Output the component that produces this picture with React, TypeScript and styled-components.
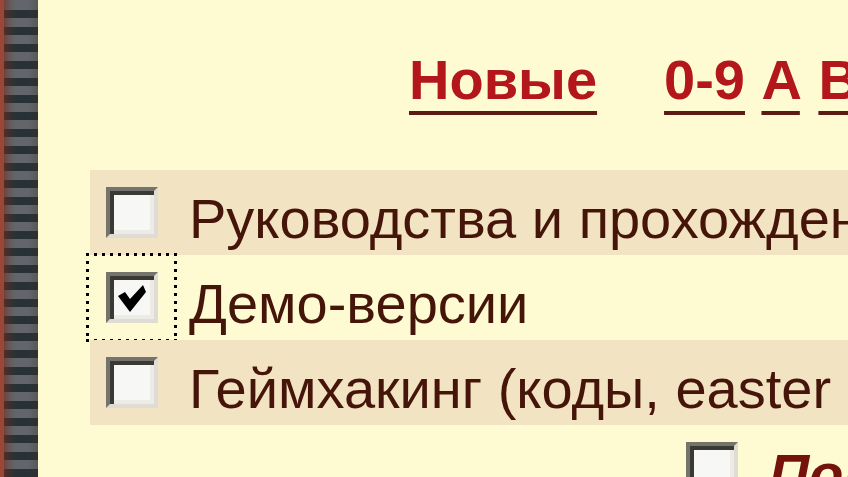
import React, { FC } from 'react';
import styled, { createGlobalStyle, css } from 'styled-components';

const GlobalStyle = createGlobalStyle`
  html, body {
    margin: 0;
    padding: 0;
    background: #fefbd2;
    overflow: hidden;
  }
  body {
    font-family: 'Liberation Sans', Arial, sans-serif;
  }
`;

const Page = styled.div`
  display: flex;
  width: 848px;
  height: 477px;
  overflow: hidden;
  background: #fefbd2;
`;

// striped frame on the left edge of the page
const SideFrame = styled.div`
  flex: 0 0 34px;
  border-left: 4px solid #9a4737;
  background:
    linear-gradient(
      to right,
      rgba(120, 40, 25, 0.55) 0,
      rgba(120, 40, 25, 0.15) 7px,
      rgba(0, 0, 0, 0) 12px,
      rgba(0, 0, 0, 0) 24px,
      rgba(70, 40, 30, 0.25) 34px
    ),
    repeating-linear-gradient(
      to bottom,
      #62666a 0 9px,
      #283236 9px 17px
    );
  background-position: 0 0, 0 1px;
`;

const Main = styled.div`
  flex: 1;
  min-width: 0;
  display: flex;
  flex-direction: column;
`;

const LetterNav = styled.nav`
  display: flex;
  gap: 67px;
  padding: 48px 0 0 371px;
  font-size: 56px;
  font-weight: bold;
  line-height: 64px;
  white-space: nowrap;
`;

const NavLink = styled.a`
  color: #b3161b;
  text-decoration: underline;
  text-decoration-color: #5c1a12;
  text-decoration-thickness: 4px;
  text-underline-offset: 12px;
`;

const LetterList = styled.span`
  color: #b3161b;
  word-spacing: 3px;
`;

const FilterList = styled.div`
  display: flex;
  flex-direction: column;
  margin-top: 58px;
  padding-left: 52px;
`;

const FilterRow = styled.label<{ shaded?: boolean; indent?: number }>`
  display: flex;
  align-items: center;
  height: 85px;
  margin-left: ${({ indent }) => indent || 0}px;
  background: ${({ shaded }) => (shaded ? '#f2e3c3' : 'transparent')};
  white-space: nowrap;
`;

// keyboard focus rectangle: square dots with wide gaps
const focusDots = css`
  background-image:
    repeating-linear-gradient(to right, #000 0 3px, transparent 3px 8px),
    repeating-linear-gradient(to right, #000 0 3px, transparent 3px 8px),
    repeating-linear-gradient(to bottom, #000 0 3px, transparent 3px 8px),
    repeating-linear-gradient(to bottom, #000 0 3px, transparent 3px 8px);
  background-size: 100% 3px, 100% 3px, 3px 100%, 3px 100%;
  background-position: 0 0, 0 100%, 0 0, 100% 0;
  background-repeat: no-repeat;
`;

const CheckCell = styled.span<{ focused?: boolean }>`
  box-sizing: border-box;
  display: flex;
  align-items: center;
  justify-content: center;
  flex: 0 0 91px;
  height: 89px;
  margin: -2px 0 -2px -4px;
  ${({ focused }) => focused && focusDots}
`;

const CheckBox = styled.span`
  box-sizing: border-box;
  display: flex;
  align-items: center;
  justify-content: center;
  width: 52px;
  height: 51px;
  background: #f7f7f5;
  border-style: solid;
  border-width: 4px;
  border-color: #74736c #dedcd4 #dedcd4 #74736c;
  box-shadow: inset 4px 4px 0 #3a3934, inset -4px -4px 0 #ecebe4;
`;

const CheckLabel = styled.span<{ strong?: boolean }>`
  box-sizing: border-box;
  height: 85px;
  padding: 12px 0 0 12px;
  font-size: 56px;
  line-height: 73px;
  color: ${({ strong }) => (strong ? '#74130c' : '#451509')};
  font-weight: ${({ strong }) => (strong ? 'bold' : 'normal')};
  font-style: ${({ strong }) => (strong ? 'italic' : 'normal')};
`;

const Tick: FC = () => (
  <svg width="32" height="30" viewBox="0 0 32 30">
    <path d="M2 13 L9 9 L14 16 L27 2 L30 9 L14 29 Z" fill="#000" />
  </svg>
);

interface FilterProps {
  label: string;
  checked?: boolean;
  focused?: boolean;
  shaded?: boolean;
  strong?: boolean;
  indent?: number;
}

const Filter: FC<FilterProps> = ({ label, checked, focused, shaded, strong, indent }) => (
  <FilterRow shaded={shaded} indent={indent}>
    <CheckCell focused={focused}>
      <CheckBox>{checked && <Tick />}</CheckBox>
    </CheckCell>
    <CheckLabel strong={strong}>{label}</CheckLabel>
  </FilterRow>
);

const App: FC = () => (
  <>
    <GlobalStyle />
    <Page>
      <SideFrame />
      <Main>
        <LetterNav>
          <NavLink href="#new">Новые</NavLink>
          <LetterList>
            <NavLink href="#num">0-9</NavLink> <NavLink href="#a">A</NavLink>{' '}
            <NavLink href="#b">B</NavLink> <NavLink href="#c">C</NavLink>
          </LetterList>
        </LetterNav>
        <FilterList>
          <Filter shaded label="Руководства и прохождения" />
          <Filter checked focused label="Демо-версии" />
          <Filter shaded label="Геймхакинг (коды, easter eggs)" />
          <Filter strong indent={580} label="Показать" />
        </FilterList>
      </Main>
    </Page>
  </>
);

export default App;
